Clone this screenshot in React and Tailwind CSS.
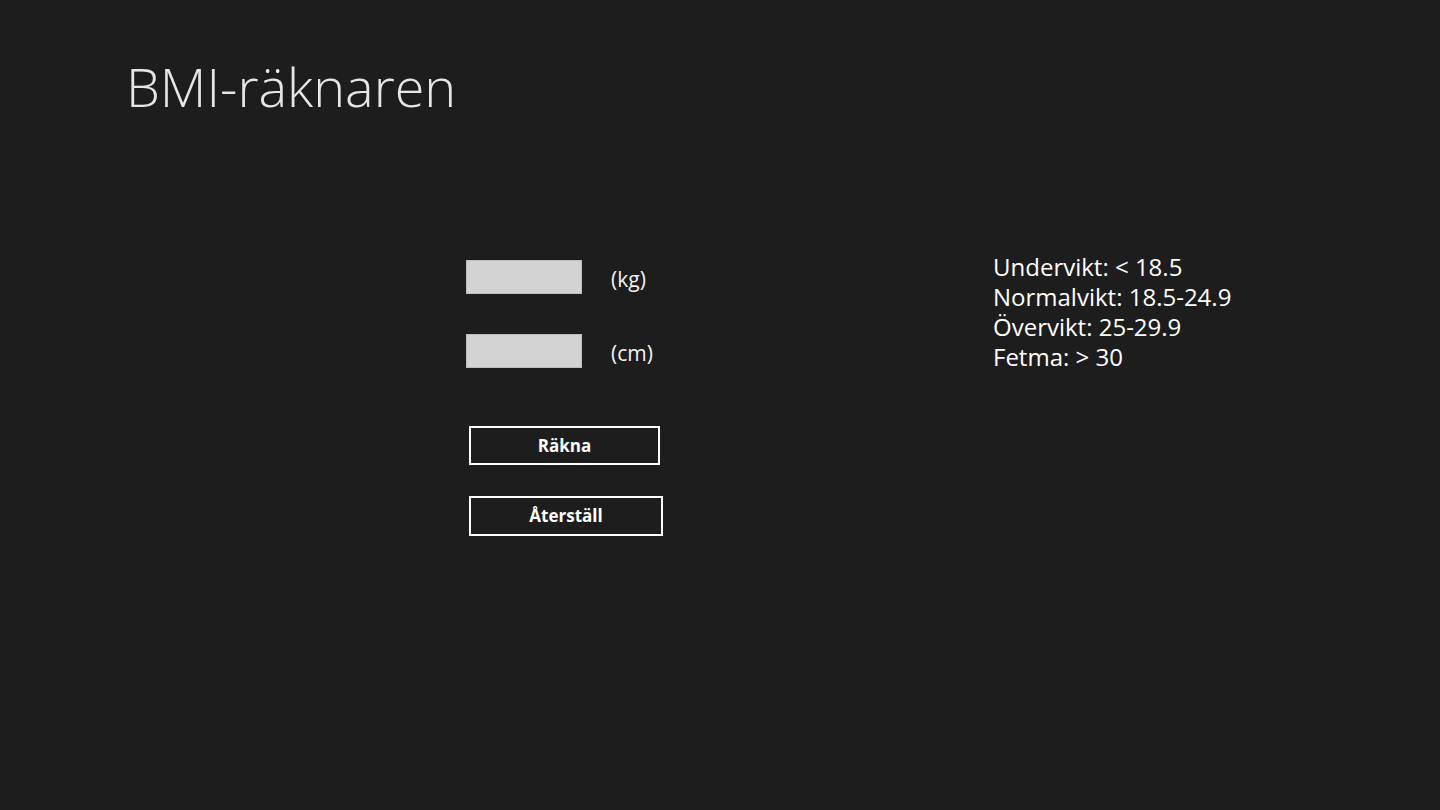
import React, { useState } from 'react';

const font = { fontFamily: '"Open Sans", "Noto Sans", "Liberation Sans", sans-serif' };

const App = () => {
  const [weight, setWeight] = useState("");
  const [height, setHeight] = useState("");

  const handleReset = () => {
    setWeight("");
    setHeight("");
  };

  return (
    <div className="w-[1440px] h-[810px] bg-[#1d1d1d] text-white overflow-hidden" style={font}>
      <div className="pl-[126px] pt-[51px]">
        <h1 className="text-[54px] leading-[70px] font-light text-[#e6e6e6]">BMI-räknaren</h1>
      </div>

      <div className="flex pl-[466px] pt-[139px]">
        {/* left column: inputs and buttons */}
        <div className="w-[527px] flex flex-col">
          <div className="flex items-center h-[34px] gap-[29px]">
            <input
              type="text"
              value={weight}
              onChange={(e) => setWeight(e.target.value)}
              className="w-[116px] h-[34px] bg-[#d3d3d3] border border-[#bdbdbd] outline-none text-black px-2"
            />
            <span className="text-[21px] text-[#f2f2f2] mt-[6px]">(kg)</span>
          </div>
          <div className="flex items-center h-[34px] gap-[29px] mt-[40px]">
            <input
              type="text"
              value={height}
              onChange={(e) => setHeight(e.target.value)}
              className="w-[116px] h-[34px] bg-[#d3d3d3] border border-[#bdbdbd] outline-none text-black px-2"
            />
            <span className="text-[21px] text-[#f2f2f2] mt-[6px]">(cm)</span>
          </div>
          <button className="mt-[58px] ml-[3px] w-[191px] h-[39px] border-2 border-white text-[17px] font-bold text-white">
            Räkna
          </button>
          <button
            onClick={handleReset}
            className="mt-[31px] ml-[3px] w-[194px] h-[40px] border-2 border-white text-[17px] font-bold text-white"
          >
            Återställ
          </button>
        </div>

        {/* right column: BMI ranges */}
        <div className="-mt-[8px] text-[24px] leading-[30px] text-white">
          <p>Undervikt: &lt; 18.5</p>
          <p>Normalvikt: 18.5-24.9</p>
          <p>Övervikt: 25-29.9</p>
          <p>Fetma: &gt; 30</p>
        </div>
      </div>
    </div>
  );
};

export default App;
